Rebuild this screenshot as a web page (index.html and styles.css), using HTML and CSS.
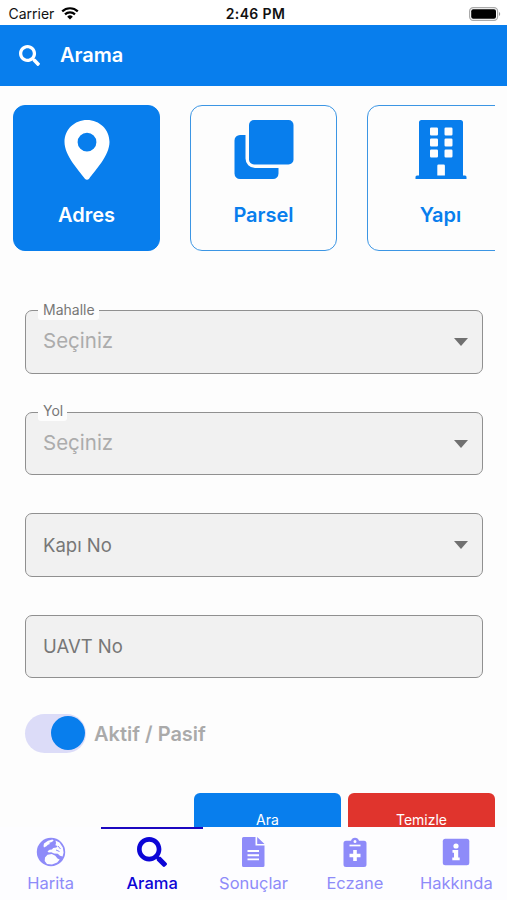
FILE: index.html
```html
<!DOCTYPE html>
<html lang="tr">
<head>
<meta charset="utf-8">
<meta name="viewport" content="width=device-width, initial-scale=1">
<title>Arama</title>
<link rel="stylesheet" href="styles.css">
</head>
<body>
<div class="app">
  <div class="status">
    <div class="carrier"><span class="carrier-name">Carrier</span>
      <svg class="wifi" viewBox="0 0 18 13" fill="none" stroke="#000" stroke-width="2.2"><path d="M1.2 4.4a11.2 11.2 0 0 1 15.6 0M4 7.4a7.2 7.2 0 0 1 10 0"/><path d="M9 12.6 6.2 9.7a4 4 0 0 1 5.6 0z" fill="#000" stroke="none"/></svg>
    </div>
    <span class="clock">2:46 PM</span>
    <svg class="battery" viewBox="0 0 32 14"><rect x=".6" y=".6" width="28" height="12.8" rx="3.6" fill="none" stroke="#aaa" stroke-width="1.2"/><rect x="2.2" y="2.2" width="24.8" height="9.6" rx="2" fill="#000"/><path d="M30 5v4c1.6-.6 1.6-3.4 0-4z" fill="#999"/></svg>
  </div>
  <header class="header">
    <svg class="header-icon" viewBox="0 0 512 512" fill="currentColor"><path d="M505 442.700 405.300 343c-4.500-4.500-10.600-7-17-7H372c27.600-35.300 44-79.700 44-128C416 93.100 322.900 0 208 0S0 93.100 0 208s93.100 208 208 208c48.300 0 92.700-16.400 128-44v16.300c0 6.400 2.500 12.500 7 17l99.700 99.700c9.400 9.400 24.600 9.400 33.900 0l28.300-28.300c9.400-9.400 9.400-24.600.1-34zM208 336c-70.700 0-128-57.200-128-128 0-70.700 57.200-128 128-128 70.700 0 128 57.200 128 128 0 70.700-57.200 128-128 128z"/></svg>
    <h1 class="title">Arama</h1>
  </header>
  <main class="content">
    <div class="cards">
      <div class="card selected">
        <svg class="card-icon" viewBox="0 0 60 60"><path fill="currentColor" fill-rule="evenodd" d="M30 0C17.500 0 7.500 9.500 7.500 22c0 13.500 14 28 20.400 36.700 1.200 1.500 3 1.500 4.200 0C38.500 50 52.500 35.500 52.500 22 52.500 9.500 42.500 0 30 0zm0 12.800a9.400 9.400 0 1 1 0 18.800 9.400 9.400 0 0 1 0-18.800z"/></svg>
        <span class="card-label">Adres</span>
      </div>
      <div class="card">
        <svg class="card-icon" viewBox="0 0 60 60" fill="currentColor"><rect x="15" y="0" width="44.500" height="44.500" rx="5"/><path d="M11.500 15H6A5.500 5.500 0 0 0 .5 20.500v33A5.500 5.500 0 0 0 6 59H39a5.500 5.500 0 0 0 5.500-5.500V48H21a9.500 9.500 0 0 1-9.500-9.500z"/></svg>
        <span class="card-label">Parsel</span>
      </div>
      <div class="card">
        <svg class="card-icon" viewBox="0 0 60 60"><path fill="currentColor" fill-rule="evenodd" d="M10.500 0h39Q52 0 52 2.500V55.500h2q1.500 0 1.500 1.500v2h-51v-2q0-1.500 1.500-1.500h2V2.500Q8 0 10.500 0zM20.200 7.500q-1.200 0-1.200 1.200v5.600q0 1.200 1.200 1.200h5.600q1.200 0 1.200-1.200V8.700q0-1.200-1.200-1.200zm14.500 0q-1.200 0-1.200 1.200v5.600q0 1.200 1.200 1.200h5.600q1.200 0 1.200-1.200V8.700q0-1.200-1.200-1.200zM20.200 18.500q-1.200 0-1.200 1.200v5.600q0 1.200 1.200 1.200h5.600q1.200 0 1.200-1.200v-5.600q0-1.200-1.200-1.200zm14.500 0q-1.200 0-1.200 1.200v5.600q0 1.200 1.200 1.200h5.600q1.200 0 1.200-1.200v-5.600q0-1.200-1.200-1.200zM20.200 29.500q-1.200 0-1.200 1.200v5.600q0 1.200 1.200 1.200h5.600q1.200 0 1.200-1.200v-5.600q0-1.200-1.200-1.200zm14.500 0q-1.200 0-1.200 1.200v5.600q0 1.200 1.200 1.200h5.600q1.200 0 1.200-1.200v-5.600q0-1.200-1.200-1.200zM27.500 44.500q-1.200 0-1.200 1.200v9.800h7.600v-9.800q0-1.200-1.200-1.200z"/></svg>
        <span class="card-label">Yapı</span>
      </div>
    </div>
    <div class="form">
      <div class="field"><span class="float-label">Mahalle</span><span class="placeholder">Seçiniz</span><span class="arrow"></span></div>
      <div class="field"><span class="float-label">Yol</span><span class="placeholder">Seçiniz</span><span class="arrow"></span></div>
      <div class="field"><span class="value">Kapı No</span><span class="arrow"></span></div>
      <div class="field last"><span class="value">UAVT No</span></div>
    </div>
    <div class="toggle-row"><span class="toggle"><span class="knob"></span></span><span class="toggle-label">Aktif / Pasif</span></div>
    <div class="actions">
      <div class="button primary">Ara</div>
      <div class="button danger">Temizle</div>
    </div>
  </main>
  <nav class="tabs">
    <div class="tab">
      <svg class="tab-icon" viewBox="0 0 30 30"><circle cx="15" cy="15" r="14.200" fill="currentColor"/><path fill="#fdfdff" d="M8 6.500 12 3.700l4.500-1.200 1.200 1.200-2.500 1.600-2 .4.700 1.400-2 .6-1.500 1.500-2.400 1.200-.5-1.500zM19.500 3.500l4 2 3.300 5 .8 5-1 4-2.600-.7-2.200-2-3.700-.3-2.800-1.300-2.600.4-1.200-1.300 2.200-1.500 2.200-.2 1.300-1.700 3.200-.5 1.200-1.500-2.200-.6.600-2.200zM9 20.500l2.500-2.700 4.300-.8 3.500 1.800 2.200 2.800 2.200.9-2.500 3-5.200 2-5-.6-2.300-2.900z"/><path stroke="currentColor" stroke-width="1" fill="none" d="M20 13l3.500 1.500M22 9l2.500 3"/></svg>
      <span class="tab-label">Harita</span>
    </div>
    <div class="tab active">
      <svg class="tab-icon" viewBox="0 0 512 512" fill="currentColor"><path d="M505 442.700 405.300 343c-4.500-4.500-10.600-7-17-7H372c27.600-35.300 44-79.700 44-128C416 93.100 322.900 0 208 0S0 93.100 0 208s93.100 208 208 208c48.300 0 92.700-16.400 128-44v16.300c0 6.400 2.500 12.500 7 17l99.700 99.700c9.400 9.400 24.600 9.400 33.900 0l28.300-28.300c9.400-9.400 9.400-24.600.1-34zM208 336c-70.700 0-128-57.200-128-128 0-70.700 57.200-128 128-128 70.700 0 128 57.200 128 128 0 70.700-57.200 128-128 128z"/></svg>
      <span class="tab-label">Arama</span>
    </div>
    <div class="tab">
      <svg class="tab-icon" viewBox="0 0 30 30"><path fill="currentColor" d="M5.500 0H17.500v8.500h9V28.500q0 1.500-1.500 1.500H5.500Q4 30 4 28.500v-27Q4 0 5.500 0zM19.200 0l7.300 7H19.200z"/><path stroke="#fff" stroke-width="1.900" d="M9.500 14h11.500M9.500 18.200h11.500M9.500 22.400h11.500"/></svg>
      <span class="tab-label">Sonuçlar</span>
    </div>
    <div class="tab">
      <svg class="tab-icon" viewBox="0 0 30 30"><path fill="currentColor" fill-rule="evenodd" d="M6 3.700h5a4.200 4.200 0 0 1 8 0h5q2.500 0 2.500 2.500v21.300Q26.500 30 24 30H6q-2.500 0-2.500-2.500V6.200Q3.500 3.700 6 3.700zM15 2.900a1.500 1.500 0 1 0 0 3 1.500 1.500 0 0 0 0-3z"/><path d="M9.500 8.500h11" stroke="#fff" stroke-width="1.700"/><path d="M15 13v11M9.500 18.500h11" stroke="#fff" stroke-width="3.600"/></svg>
      <span class="tab-label">Eczane</span>
    </div>
    <div class="tab">
      <svg class="tab-icon" viewBox="0 0 30 30"><rect x="1.800" y="1.800" width="26.500" height="26.500" rx="2.500" fill="currentColor"/><circle cx="15" cy="9" r="2.600" fill="#fff"/><path fill="#fff" d="M11.500 13h5.700v7.400h1.500v2.800h-7.400v-2.800h1.700v-4.600h-1.500z"/></svg>
      <span class="tab-label">Hakkında</span>
    </div>
  </nav>
</div>
</body>
</html>
```
FILE: styles.css
```css
* { box-sizing: border-box; }
body { margin: 0; background: #fdfdfd; font-family: Inter, sans-serif; }
svg { display: block; flex: none; }
.app { width: 507px; height: 900px; display: flex; flex-direction: column; overflow: hidden; }
.status { height: 25px; flex: none; background: #fff; display: grid; grid-template-columns: 1fr auto 1fr; align-items: center; padding: 2px 6px 0 8px; color: #111; font-size: 14px; line-height: 20px; }
.carrier { display: flex; align-items: center; gap: 7px; padding-left: .5px; }
.wifi { width: 18px; height: 13px; }
.clock { font-weight: 600; font-size: 14px; letter-spacing: .35px; padding-left: 2px; }
.battery { width: 32px; height: 14px; justify-self: end; }
.header { height: 61px; flex: none; background: #087eed; color: #fff; display: flex; align-items: center; padding: 0 0 1px 19px; gap: 20px; }
.header-icon { width: 21px; height: 21px; }
.title { margin: 0; font-size: 20px; line-height: 24px; font-weight: 600; }
.content { height: 741px; flex: none; padding: 19px 12px 0; overflow: hidden; }
.cards { display: flex; gap: 30px; overflow: hidden; padding-left: 1px; }
.card { width: 147px; height: 146px; flex: none; border: 1.500px solid #3c96e4; border-radius: 12px; color: #087eed; display: flex; flex-direction: column; align-items: center; padding-top: 13.500px; gap: 18.500px; }
.selected { background: #087eed; border-color: #087eed; color: #fff; }
.card-icon { width: 60px; height: 60px; }
.card-label { font-size: 20px; line-height: 34px; font-weight: 600; }
.form { padding: 59px 12px 0 13px; display: flex; flex-direction: column; gap: 38px; }
.field { position: relative; height: 63.700px; border: 1.500px solid #909090; border-radius: 7px; background: #f1f1f1; display: flex; align-items: center; justify-content: space-between; padding: 0 14px 0 17px; }
.last { height: 62.500px; }
.float-label { position: absolute; top: -10.500px; left: 12px; padding: 0 4px 0 5px; height: 19px; line-height: 18px; font-size: 14px; color: #777; background: #fdfdfd; border-radius: 3px; }
.placeholder { font-size: 20.500px; line-height: 26px; color: #acacac; padding-bottom: 2px; }
.value { font-size: 18.500px; line-height: 24px; color: #777; padding-bottom: 1px; }
.arrow { border: 7.500px solid transparent; border-top: 8px solid #707070; border-bottom: 0; }
.toggle-row { display: flex; align-items: center; margin-top: 36.400px; padding-left: 13px; gap: 8px; height: 39px; }
.toggle { width: 61px; height: 39px; border-radius: 20px; background: #dcdcf8; display: flex; align-items: center; justify-content: flex-end; padding-right: 1.500px; }
.knob { width: 34px; height: 34px; border-radius: 50%; background: #087eed; }
.toggle-label { font-size: 20px; font-weight: 600; line-height: 24px; color: #aaa; padding-top: 2px; }
.actions { margin-top: 40px; display: flex; justify-content: flex-end; gap: 7px; }
.button { width: 147px; height: 54px; flex: none; border-radius: 6px; color: #fff; font-size: 14px; line-height: 53px; text-align: center; }
.primary { background: #087eed; }
.danger { background: #e0342d; }
.tabs { flex: 1; display: grid; grid-template-columns: repeat(5, 1fr); background: #fdfdff; }
.tab { color: #8e8bf9; display: flex; flex-direction: column; align-items: center; padding-top: 8px; gap: 6px; border-top: 2px solid transparent; }
.active { color: #0c05d6; border-color: #1c08c0; }
.tab-icon { width: 30px; height: 30px; }
.tab-label { font-size: 16.500px; line-height: 21px; }
.active .tab-label { font-weight: 500; }
```
